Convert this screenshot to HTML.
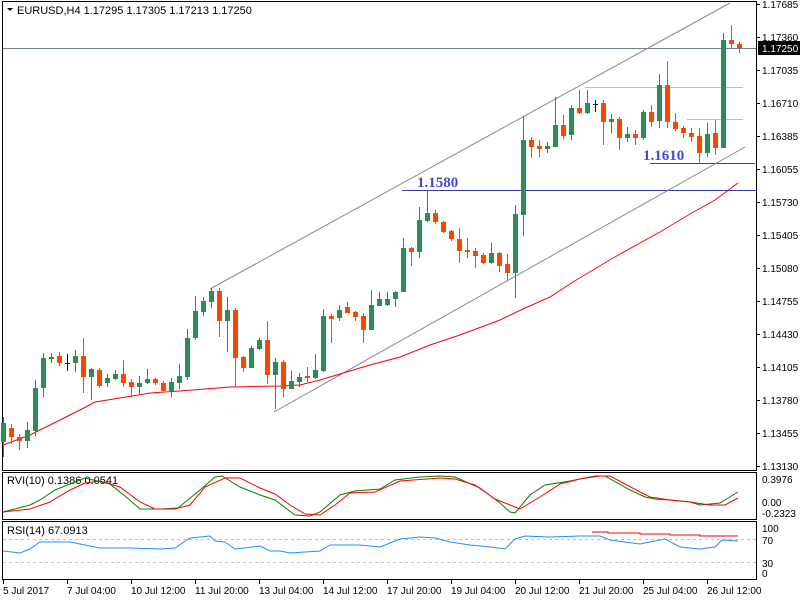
<!DOCTYPE html>
<html><head><meta charset="utf-8"><style>
html,body{margin:0;padding:0;background:#fff;width:800px;height:600px;overflow:hidden}
svg{display:block}
text{font-family:"Liberation Sans",sans-serif;font-size:11px;fill:#000}
.ax{font-size:10px}
</style></head><body>
<svg id="s" width="800" height="600" xmlns="http://www.w3.org/2000/svg">
<rect width="800" height="600" fill="#fff"/>
<rect x="2.5" y="1.5" width="754" height="469" fill="none" stroke="#000"/>
<rect x="2.5" y="472.5" width="754" height="47" fill="none" stroke="#000"/>
<rect x="2.5" y="521.5" width="754" height="58" fill="none" stroke="#000"/>
<line x1="3" y1="48.5" x2="756" y2="48.5" stroke="#708090"/>
<line x1="585" y1="87.5" x2="743" y2="87.5" stroke="#c0c0c0"/>
<line x1="687" y1="119.5" x2="743" y2="119.5" stroke="#c0c0c0"/>
<line x1="402" y1="190.5" x2="756" y2="190.5" stroke="#3a3aa8"/>
<line x1="650" y1="163.5" x2="755" y2="163.5" stroke="#3a3aa8"/>
<text x="417" y="187" style="font-family:'Liberation Serif',serif;font-size:15px;font-weight:bold;fill:#4848d0">1.1580</text>
<text x="643" y="160" style="font-family:'Liberation Serif',serif;font-size:15px;font-weight:bold;fill:#4848d0">1.1610</text>
<line x1="210" y1="289" x2="730" y2="3" stroke="#888"/>
<line x1="274" y1="412" x2="745" y2="147" stroke="#888"/>
<polyline fill="none" stroke="#f00" stroke-width="1" points="3,445 30,435 60,420 80,410 95,402 120,398 150,393 180,391 230,387 280,386 300,385 320,380 340,374 370,365 400,357 430,345 460,335 500,320 523,309 550,297 573,282 613,258 640,243 660,232 690,214 715,200 738,183"/>
<g id="c"></g>
<path d="M7 8 L13 8 L10 11 Z" fill="#000"/>
<text x="17" y="14">EURUSD,H4  1.17295 1.17305 1.17213 1.17250</text>
<g id="ax"></g>
<rect x="758" y="41" width="42" height="14" fill="#000"/>
<text class="ax" x="762" y="52" style="fill:#fff">1.17250</text>
<text x="7" y="484">RVI(10) 0.1386 0.0541</text>
<polyline fill="none" stroke="#008000" points="3,512 30,505 40,500 55,490 75,482 85,478 110,484 125,496 140,509 160,509 178,508 200,490 215,477 222,476 240,487 260,495 275,500 295,515 310,516 320,512 340,495 355,491 380,489 395,480 420,477 440,476 455,477 480,488 500,503 510,512 515,513 530,495 545,485 570,481 595,476 605,476 630,490 645,497 655,499 670,500 690,502 700,505 720,503 738,492"/>
<polyline fill="none" stroke="#f00" points="3,512 30,509 50,502 70,490 85,483 100,481 120,487 140,502 155,509 175,509 190,505 205,487 225,478 240,478 260,488 275,494 290,505 305,514 320,515 335,505 350,493 375,492 400,481 440,478 455,479 475,485 495,499 520,509 540,497 560,484 580,479 600,476 610,476 625,484 640,492 650,497 670,500 690,502 710,505 725,505 738,498"/>
<text class="ax" x="762" y="483">0.3976</text>
<text class="ax" x="762" y="506">0.00</text>
<text class="ax" x="762" y="517">-0.2323</text>
<text x="7" y="534">RSI(14) 67.0913</text>
<line x1="3" y1="539.5" x2="756" y2="539.5" stroke="#c0c0c0" stroke-dasharray="3,3"/>
<line x1="3" y1="562.5" x2="756" y2="562.5" stroke="#c0c0c0" stroke-dasharray="3,3"/>
<polyline fill="none" stroke="#1e90ff" points="3,551 20,553 30,549 40,542 70,542 80,544 90,546 100,548 130,548 160,549 175,548 190,538 210,536 215,541 225,542 235,549 245,548 260,546 270,551 280,551 290,553 320,551 330,545 360,545 380,547 400,539 420,537 435,538 450,542 470,545 490,547 505,549 515,539 525,536 550,537 580,536 600,536 610,540 625,542 640,544 655,541 665,539 680,547 700,549 715,547 722,540 738,541"/>
<polyline fill="none" stroke="#f00" points="592,532 608,532 608,533 640,533 640,534 670,534 670,535 700,535 700,536 738,536"/>
<text class="ax" x="762" y="532">100</text>
<text class="ax" x="762" y="544">70</text>
<text class="ax" x="762" y="567">30</text>
<text class="ax" x="762" y="577">0</text>
<g id="t"></g>
</svg>
<script>
var d=[[442,423,417,457],[428,437,424,444],[437,441,434,450],[441,430,422,448],[431,388,380,436],[388,358,353,397],[359,357,353,363],[356,363,352,366],[363,363,354,371],[363,356,350,372],[356,377,338,393],[377,369,368,400],[370,386,368,388],[383,378,374,387],[379,374,370,380],[374,383,360,387],[382,387,379,397],[387,383,376,394],[383,379,369,384],[379,383,378,385],[383,391,381,391],[391,382,378,397],[383,376,364,389],[377,338,329,380],[338,311,296,340],[312,301,297,316],[302,291,288,308],[291,321,288,337],[321,310,297,352],[310,358,308,387],[357,368,356,372],[368,348,346,368],[349,340,338,350],[340,375,321,384],[375,362,358,409],[362,389,360,397],[389,381,371,389],[382,377,373,387],[376,378,367,382],[378,370,354,379],[371,316,309,372],[316,319,314,343],[318,310,305,321],[307,313,302,313],[312,317,311,321],[316,330,313,343],[330,305,290,330],[306,299,292,306],[305,299,292,306],[299,292,291,307],[292,248,238,292],[248,252,247,266],[252,220,207,258],[221,213,191,222],[213,222,210,224],[222,232,221,233],[231,239,230,241],[239,251,228,263],[250,252,238,258],[251,256,248,268],[255,263,253,264],[263,253,243,264],[253,266,252,272],[264,273,254,281],[273,214,205,298],[215,140,116,236],[140,147,137,158],[146,149,140,157],[149,146,142,153],[147,125,97,147],[125,136,115,140],[135,108,105,140],[108,113,90,114],[113,103,90,114],[104,104,100,112],[103,122,100,145],[122,119,114,133],[119,138,117,150],[138,134,127,142],[134,138,130,145],[138,112,110,140],[112,122,105,127],[121,85,74,128],[85,122,61,128],[122,129,113,131],[128,133,126,138],[133,137,128,142],[136,153,128,163],[153,134,123,157],[133,148,120,155],[148,40,33,148],[40,44,25,48],[44,48,42,53]];
var h='';
for(var i=0;i<d.length;i++){var x=3+8*i,o=d[i][0],c=d[i][1],hi=d[i][2],lo=d[i][3];
var col=c<o?'#2e8b57':(c>o?'#ff4500':'#0000cd');
h+='<line x1="'+(x+.5)+'" y1="'+hi+'" x2="'+(x+.5)+'" y2="'+lo+'" stroke="'+col+'"/>';
var t=Math.min(o,c),bh=Math.max(Math.abs(o-c),1);
h+='<rect x="'+(x-2)+'" y="'+t+'" width="5" height="'+bh+'" fill="'+col+'"/>';}
document.getElementById('c').innerHTML=h;
var a=['1.17685','1.17360','1.17035','1.16710','1.16385','1.16055','1.15730','1.15405','1.15080','1.14755','1.14430','1.14105','1.13780','1.13455','1.13130'];
h='';for(i=0;i<a.length;i++){var y=4+33*i;h+='<line x1="757" y1="'+(y+.5)+'" x2="760" y2="'+(y+.5)+'" stroke="#000"/><text class="ax" x="762" y="'+(y+4)+'">'+a[i]+'</text>';}
document.getElementById('ax').innerHTML=h;
var tl=['5 Jul 2017','7 Jul 04:00','10 Jul 12:00','11 Jul 20:00','13 Jul 04:00','14 Jul 12:00','17 Jul 20:00','19 Jul 04:00','20 Jul 12:00','21 Jul 20:00','25 Jul 04:00','26 Jul 12:00'];
h='';for(i=0;i<tl.length;i++){var x=3+64*i;h+='<line x1="'+(x+.5)+'" y1="580" x2="'+(x+.5)+'" y2="584" stroke="#000"/><text class="ax" x="'+x+'" y="594">'+tl[i]+'</text>';}
document.getElementById('t').innerHTML=h;
</script>
</body></html>
